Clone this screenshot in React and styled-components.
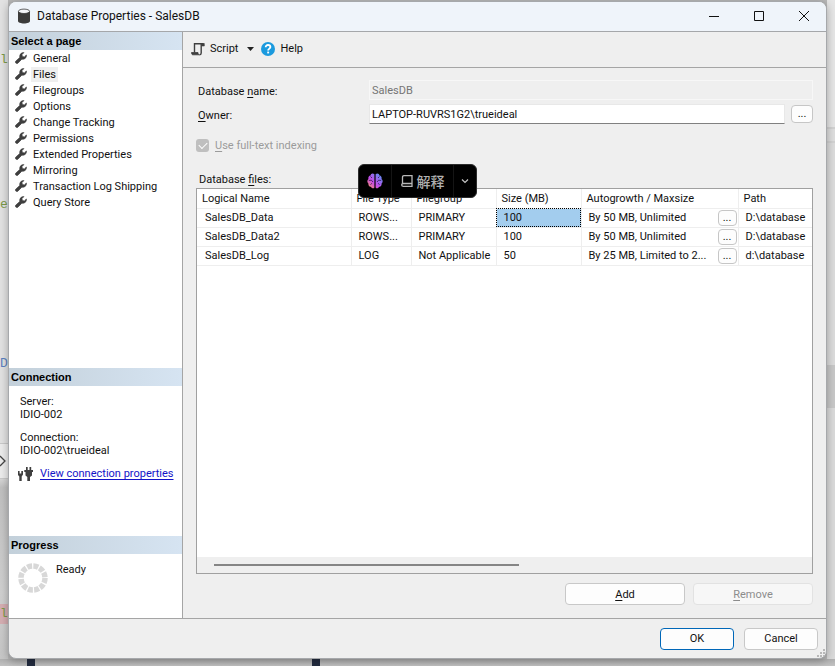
import React, { useState } from 'react';
import styled, { createGlobalStyle, css } from 'styled-components';

const pages = [
  'General',
  'Files',
  'Filegroups',
  'Options',
  'Change Tracking',
  'Permissions',
  'Extended Properties',
  'Mirroring',
  'Transaction Log Shipping',
  'Query Store',
];

const files = [
  { name: 'SalesDB_Data', type: 'ROWS...', group: 'PRIMARY', size: '100', growth: 'By 50 MB, Unlimited', path: 'D:\\database' },
  { name: 'SalesDB_Data2', type: 'ROWS...', group: 'PRIMARY', size: '100', growth: 'By 50 MB, Unlimited', path: 'D:\\database' },
  { name: 'SalesDB_Log', type: 'LOG', group: 'Not Applicable', size: '50', growth: 'By 25 MB, Limited to 2...', path: 'd:\\database' },
];

const DatabaseIcon = () => (
  <svg width="14" height="16" viewBox="0 0 14 16">
    <path d="M1 3.500v9.500c0 1.500 2.700 2.500 6 2.500s6-1 6-2.500V3.500z" fill="#3b3b3b" />
    <ellipse cx="7" cy="3.300" rx="5.600" ry="2.200" fill="#f4f6fa" stroke="#3b3b3b" strokeWidth=".8" />
  </svg>
);

const WrenchIcon = () => (
  <svg width="12" height="12" viewBox="0 0 12 12" fill="#3f3f3f" stroke="#3f3f3f" strokeWidth=".7" strokeLinejoin="round">
    <path d="M.7 9.200 4.800 5.500C4.300 2.700 6 .5 8.900.6L7 2.500l.3 2.100 2.100.3 2-1.900c.3 2.700-1.700 4.700-4.600 4.200L2.900 11.200C1.400 12.200-.3 10.600.7 9.200z" />
  </svg>
);

const ScriptIcon = () => (
  <svg width="14" height="14" viewBox="0 0 14 14" fill="none" stroke="#3f3f3f">
    <path d="M3.500 10.500V1.700h9M10.200 2v9c0 1.200-.4 1.700-1.500 1.700" strokeWidth="1.400" />
    <path d="M10.500 4V1.500h2.800V4z" fill="#3f3f3f" strokeWidth=".6" />
    <path d="M.5 10.500h6.500c0 1.200.4 2.300 1.500 2.300H2C1 12.800.5 12 .5 10.500z" fill="#3f3f3f" strokeWidth=".8" />
  </svg>
);

const HelpIcon = () => (
  <svg width="14" height="14" viewBox="0 0 14 14">
    <circle cx="7" cy="7" r="7" fill="#1b9ade" />
    <path d="M4.700 5.300C4.700 3.700 5.600 3 7 3s2.400.8 2.400 2.100C9.400 6.700 7.100 6.600 7.100 8.600" fill="none" stroke="#fff" strokeWidth="1.800" />
    <rect x="6.200" y="9.600" width="1.900" height="1.800" fill="#fff" />
  </svg>
);

const PlugIcon = () => (
  <svg width="15" height="14" viewBox="0 0 15 14" fill="#3f3f3f">
    <path d="M0 4h1.600v2.600h1.700V4h1.700v3.500L3.700 9.500V14H1.300V9.500L0 8z" />
    <path d="M8 0h1.700v3h1.800V0h1.700v3H15v2h-1v3.500l-2 1.500v4H9.300v-4l-1.800-1.500V5H6.300V3H8z" />
  </svg>
);

const BrainIcon = () => (
  <svg width="16" height="16" viewBox="0 0 16 16">
    <defs>
      <linearGradient id="brain" x1="0" y1="1" x2="1" y2="0">
        <stop offset="0" stopColor="#ff9a5a" />
        <stop offset=".4" stopColor="#c64be8" />
        <stop offset="1" stopColor="#4b9af5" />
      </linearGradient>
    </defs>
    <path d="M7.400 1.300C5.600-.2 3.700 1 3.500 2.600 1.600 3 1 4.700 1.500 6 0 7.200-.1 9.300 1.400 10.500c-.2 2 1 3.200 2.600 3.300.8 1.800 2.600 2 3.400.7zM8.600 1.300c1.800-1.500 3.700-.3 3.900 1.300 1.900.4 2.500 2.100 2 3.400 1.500 1.200 1.600 3.300.1 4.500.2 2-1 3.200-2.600 3.300-.8 1.800-2.600 2-3.400.7z" fill="url(#brain)" />
    <path d="M3.500 3.500 5 5M1.800 7.500l2.500-.3L6 9M3.500 11.800l1.300-1.600M12.500 3.500 11 5M14.200 7.500l-2.500-.3L10 9M12.500 11.800l-1.300-1.600" fill="none" stroke="#241038" strokeWidth=".7" />
  </svg>
);

const BookIcon = () => (
  <svg width="12" height="12" viewBox="0 0 12 12" fill="none" stroke="#b8b8b8" strokeWidth="1.300">
    <path d="M11 8.500V.7H3C1.700.7 1.500 1.300 1.500 2.500v6M11 8.500H2.500C1.400 8.500.7 9 .7 10s.7 1.300 1.800 1.300H11z" />
  </svg>
);

const ChevronIcon = () => (
  <svg width="8" height="6" viewBox="0 0 8 6" fill="none" stroke="#c4c4c4" strokeWidth="1.200">
    <path d="m1 1.500 3 3 3-3" />
  </svg>
);

const CaptionIcon = ({ shape }) => (
  <svg width="12" height="12" viewBox="0 0 12 12" fill="none" stroke="#111">
    <path d={shape} />
  </svg>
);

const App = () => {
  const [page, setPage] = useState('Files');

  return (
    <>
      <GlobalStyle />
      <Desktop>
        <EditorEdge aria-hidden="true">
          <Gap $h={50} />
          <Code>l</Code>
          <Gap $h={125} />
          <Code>e</Code>
          <Gap $h={139} />
          <Code $color="#5c80c0">D</Code>
          <Gap $h={69} />
          <Arrow>
            <svg width="8" height="12" viewBox="0 0 8 12" fill="none" stroke="#444" strokeWidth="1.300"><path d="m0 1 5 5-5 5" /></svg>
          </Arrow>
          <Gap $h={125} />
          <Code $marked>l</Code>
        </EditorEdge>
        <Dialog>
          <TitleBar>
            <DatabaseIcon />
            <h1>Database Properties - SalesDB</h1>
            <CaptionButton aria-label="Minimize"><CaptionIcon shape="M1 6.500h10" /></CaptionButton>
            <CaptionButton aria-label="Maximize"><CaptionIcon shape="M1.500 1.500h9v9h-9z" /></CaptionButton>
            <CaptionButton aria-label="Close"><CaptionIcon shape="m1 1 10 10M11 1 1 11" /></CaptionButton>
          </TitleBar>
          <Body>
            <Sidebar>
              <SideTitle>Select a page</SideTitle>
              <PageList>
                {pages.map((item) => (
                  <li key={item}>
                    <PageButton $active={item === page} onClick={() => setPage(item)}>
                      <WrenchIcon />
                      <span>{item}</span>
                    </PageButton>
                  </li>
                ))}
              </PageList>
              <SideTitle>Connection</SideTitle>
              <Connection>
                <dl>
                  <dt>Server:</dt>
                  <dd>IDIO-002</dd>
                  <dt>Connection:</dt>
                  <dd>IDIO-002\trueideal</dd>
                </dl>
                <ConnectionLink>
                  <PlugIcon />
                  <a href="#connection">View connection properties</a>
                </ConnectionLink>
              </Connection>
              <SideTitle>Progress</SideTitle>
              <Progress>
                <svg width="30" height="30" viewBox="0 0 30 30" fill="none">
                  <circle cx="15" cy="15" r="12" stroke="#d8d8d8" strokeWidth="5.500" strokeDasharray="5 1.283" />
                </svg>
                <span>Ready</span>
              </Progress>
            </Sidebar>
            <Main>
              <Toolbar>
                <ToolButton>
                  <ScriptIcon />
                  Script
                  <Caret width="7" height="4" viewBox="0 0 7 4"><path d="M0 0h7L3.500 4z" fill="#222" /></Caret>
                </ToolButton>
                <ToolButton>
                  <HelpIcon />
                  Help
                </ToolButton>
              </Toolbar>
              <Content>
                <Field>
                  <label htmlFor="dbname">Database <u>n</u>ame:</label>
                  <TextInput id="dbname" defaultValue="SalesDB" disabled />
                </Field>
                <Field>
                  <label htmlFor="owner"><u>O</u>wner:</label>
                  <TextInput id="owner" defaultValue="LAPTOP-RUVRS1G2\trueideal" />
                  <BrowseButton aria-label="Browse owner">...</BrowseButton>
                </Field>
                <CheckLabel>
                  <input type="checkbox" defaultChecked disabled />
                  <span><u>U</u>se full-text indexing</span>
                </CheckLabel>
                <FilesHead>
                  <span id="files-label">Database <u>f</u>iles:</span>
                  <Popup>
                    <PopupButton $w={32} aria-label="Assistant"><BrainIcon /></PopupButton>
                    <PopupButton $w={62}><BookIcon />解释</PopupButton>
                    <PopupButton $w={23} aria-label="More"><ChevronIcon /></PopupButton>
                  </Popup>
                </FilesHead>
                <GridBox>
                  <FileTable aria-labelledby="files-label">
                    <colgroup>
                      <col width="154" />
                      <col width="60" />
                      <col width="85" />
                      <col width="85" />
                      <col width="157" />
                      <col />
                    </colgroup>
                    <thead>
                      <tr>
                        <th>Logical Name</th>
                        <th>File Type</th>
                        <th>Filegroup</th>
                        <th>Size (MB)</th>
                        <th>Autogrowth / Maxsize</th>
                        <th>Path</th>
                      </tr>
                    </thead>
                    <tbody>
                      {files.map((file, i) => (
                        <tr key={file.name}>
                          <td>{file.name}</td>
                          <td>{file.type}</td>
                          <td>{file.group}</td>
                          <SizeCell $selected={i === 0}>{file.size}</SizeCell>
                          <td>
                            <Growth>
                              {file.growth}
                              <CellButton aria-label={`Edit growth of ${file.name}`}>...</CellButton>
                            </Growth>
                          </td>
                          <td>{file.path}</td>
                        </tr>
                      ))}
                    </tbody>
                  </FileTable>
                  <ScrollTrack><ScrollThumb /></ScrollTrack>
                </GridBox>
                <Actions>
                  <Button $w={120}><u>A</u>dd</Button>
                  <Button $w={120} disabled><u>R</u>emove</Button>
                </Actions>
              </Content>
            </Main>
          </Body>
          <Footer>
            <Button $w={74} $primary>OK</Button>
            <Button $w={74}>Cancel</Button>
            <Grip width="9" height="9" viewBox="0 0 9 9" fill="#b8b8b8">
              <path d="M6 0h2v2H6zM3 3h2v2H3zM6 3h2v2H6zM0 6h2v2H0zM3 6h2v2H3zM6 6h2v2H6z" />
            </Grip>
          </Footer>
        </Dialog>
        <RightEdge />
        <BottomEdge>
          <DarkBar />
          <DarkBar />
        </BottomEdge>
      </Desktop>
    </>
  );
};

const GlobalStyle = createGlobalStyle`
* {
  box-sizing: border-box;
}
body {
  margin: 0;
  font: 11px/13px Roboto, "Liberation Sans", sans-serif;
  color: #111;
}
button, input {
  font: inherit;
  color: inherit;
}
h1, h2, ul, dl, dd {
  margin: 0;
  padding: 0;
}
u {
  text-underline-offset: 2px;
}
`;

const Desktop = styled.div`
  display: grid;
  grid-template-columns: 8px 1fr 8px;
  grid-template-rows: 1fr 7px;
  min-height: 100vh;
  background: #b9b9b9;
  overflow: hidden;
`;

const EditorEdge = styled.div`
  display: flex;
  flex-direction: column;
  background: linear-gradient(#e2e2e2 0 72%, #c0c0c0 74%, #d0d0d0 90%, #c6c6c6);
`;

const Gap = styled.div`
  height: ${({ $h }) => $h}px;
`;

const Code = styled.span`
  height: 20px;
  font: 13px/20px "Liberation Mono", monospace;
  color: ${({ $color }) => $color || '#7c9a48'};
  background: ${({ $marked }) => ($marked ? '#d5aeb2' : 'none')};
`;

const Arrow = styled.div`
  display: flex;
  align-items: center;
  height: 36px;
  background: #ececec;
  border-top: 1px solid #c9c9c9;
  border-bottom: 1px solid #c9c9c9;
`;

const RightEdge = styled.div`
  background: linear-gradient(#e6e6e6 0 127px, #d2d2d2 127px 129px, #dedede 129px 141px, #d2d2d2 141px 143px, #dcdcdc 143px 365px, #c8c8c8 365px 408px, #dadada 408px);
`;

const BottomEdge = styled.div`
  display: flex;
  gap: 277px;
  grid-column: 1 / -1;
  padding-left: 27px;
  background: linear-gradient(#b0b0b0, #c2c2c2);
`;

const DarkBar = styled.div`
  width: 8px;
  background: #232c40;
`;

const Dialog = styled.main`
  display: flex;
  flex-direction: column;
  position: relative;
  z-index: 1;
  margin-top: 1px;
  background: #efefef;
  border: 1px solid #a6a8ab;
  border-radius: 8px;
  box-shadow: 0 2px 8px rgba(0, 0, 0, .3);
  overflow: hidden;
`;

const TitleBar = styled.header`
  display: flex;
  align-items: center;
  height: 30px;
  padding: 0 0 2px 8px;
  background: #eff4fa;
  border-bottom: 1px solid #a5a7aa;
  h1 {
    flex: 1;
    padding-left: 6px;
    font: 12px/16px Roboto, "Open Sans", sans-serif;
  }
`;

const CaptionButton = styled.button`
  display: flex;
  align-items: center;
  justify-content: center;
  width: 45px;
  height: 28px;
  padding: 0;
  background: none;
  border: none;
`;

const Body = styled.div`
  display: flex;
  flex: 1;
`;

const Sidebar = styled.aside`
  display: flex;
  flex-direction: column;
  width: 174px;
  background: #fff;
  border-right: 1px solid #a5a5a5;
`;

const SideTitle = styled.h2`
  height: 18px;
  padding-left: 2px;
  font: bold 11px/18px "Liberation Sans", Arial, sans-serif;
  color: #000;
  background: linear-gradient(90deg, #c3d0da, #d6e4f2);
`;

const PageList = styled.ul`
  flex: 1;
  list-style: none;
`;

const PageButton = styled.button`
  display: flex;
  align-items: center;
  gap: 4px;
  width: 100%;
  height: 16px;
  padding: 0 6px;
  background: none;
  border: none;
  span {
    padding: 0 2px;
    line-height: 15px;
    background: ${({ $active }) => ($active ? '#efefef' : 'none')};
  }
`;

const Connection = styled.div`
  height: 150px;
  padding: 9px 11px;
  dd {
    margin-bottom: 10px;
  }
`;

const ConnectionLink = styled.div`
  display: flex;
  gap: 7px;
  margin-left: -2px;
  white-space: nowrap;
  svg {
    flex-shrink: 0;
  }
  a {
    color: #1414c8;
    text-underline-offset: 2px;
  }
`;

const Progress = styled.div`
  display: flex;
  gap: 8px;
  height: 64px;
  padding: 9px;
`;

const Main = styled.section`
  display: flex;
  flex: 1;
  flex-direction: column;
  min-width: 0;
`;

const Toolbar = styled.div`
  display: flex;
  gap: 7px;
  height: 36px;
  padding: 0 0 2px 8px;
  border-bottom: 1px solid #a5a5a5;
`;

const ToolButton = styled.button`
  display: flex;
  align-items: center;
  gap: 5px;
  padding: 0;
  background: none;
  border: none;
`;

const Caret = styled.svg`
  margin-left: 4px;
`;

const Content = styled.div`
  display: flex;
  flex: 1;
  flex-direction: column;
  padding: 10px 13px 13px;
`;

const Field = styled.div`
  display: flex;
  align-items: center;
  height: 24px;
  label {
    width: 173px;
    padding: 2px 0 0 2px;
  }
`;

const TextInput = styled.input`
  flex: 1;
  height: 20px;
  padding: 0 2px;
  background: #fff;
  border: 1px solid #e8e8e8;
  border-bottom-color: #808080;
  outline: none;
  &:disabled {
    color: #757575;
    background: #efefef;
    border-color: #f7f7f7;
  }
`;

const BrowseButton = styled.button`
  width: 22px;
  height: 18px;
  margin-left: 6px;
  padding: 0;
  line-height: 16px;
  background: #fdfdfd;
  border: 1px solid #c6c6c6;
  border-radius: 4px;
`;

const CheckLabel = styled.label`
  display: flex;
  align-items: center;
  gap: 6px;
  height: 38px;
  color: #9b9b9b;
  input {
    appearance: none;
    width: 13px;
    height: 13px;
    margin: 0;
    background: #bfbfbf;
    border-radius: 3px;
    &::before {
      content: "";
      display: block;
      width: 7px;
      height: 4px;
      margin: 3px;
      border: solid #fff;
      border-width: 0 0 1px 1px;
      transform: rotate(-45deg);
    }
  }
`;

const FilesHead = styled.div`
  display: flex;
  align-items: center;
  position: relative;
  height: 24px;
  padding: 6px 0 0 3px;
`;

// floats over the header row of the grid
const Popup = styled.div`
  display: flex;
  position: absolute;
  z-index: 2;
  top: 0;
  left: 162px;
  height: 34px;
  background: #000;
  border: 1px solid #2c2c2c;
  border-radius: 6px;
`;

const PopupButton = styled.button`
  display: flex;
  align-items: center;
  justify-content: center;
  gap: 4px;
  width: ${({ $w }) => $w}px;
  padding: 0;
  font: 500 14px/20px "Noto Sans CJK SC", sans-serif;
  color: #b0b0b0;
  background: none;
  border: none;
  & + & {
    border-left: 1px solid #151515;
  }
`;

const GridBox = styled.div`
  display: flex;
  flex: 1;
  flex-direction: column;
  justify-content: space-between;
  background: #fff;
  border: 1px solid #a0a0a0;
`;

const FileTable = styled.table`
  width: 100%;
  table-layout: fixed;
  border-collapse: collapse;
  th, td {
    height: 19px;
    padding: 0 0 0 7px;
    font-weight: normal;
    text-align: left;
    white-space: nowrap;
    border-right: 1px solid #eee;
    border-bottom: 1px solid #eee;
  }
  th {
    padding-left: 5px;
  }
  td:first-child {
    padding-left: 8px;
  }
  th:last-child, td:last-child {
    border-right: none;
  }
`;

const SizeCell = styled.td`
  ${({ $selected }) => $selected && css`
    background: #a3cdee;
    outline: 1px dotted #000;
    outline-offset: -1px;
  `}
`;

const Growth = styled.div`
  display: flex;
  align-items: center;
  justify-content: space-between;
  padding-right: 1px;
`;

const CellButton = styled(BrowseButton)`
  width: 19px;
  height: 16px;
  line-height: 14px;
`;

const ScrollTrack = styled.div`
  height: 16px;
  padding: 7px 12px 7px 17px;
  background: #efefef;
`;

const ScrollThumb = styled.div`
  width: 52%;
  height: 2px;
  background: #858585;
`;

const Actions = styled.div`
  display: flex;
  justify-content: flex-end;
  gap: 8px;
  padding-top: 9px;
`;

const Button = styled.button`
  width: ${({ $w }) => $w}px;
  height: 22px;
  padding: 0;
  background: #fdfdfd;
  border: 1px solid ${({ $primary }) => ($primary ? '#0067b8' : '#c8c8c8')};
  border-radius: 4px;
  &:disabled {
    color: #8c8c8c;
    background: #f7f7f7;
    border-color: #e2e2e2;
  }
`;

const Footer = styled.footer`
  display: flex;
  align-items: center;
  justify-content: flex-end;
  gap: 10px;
  position: relative;
  height: 40px;
  padding-right: 8px;
  border-top: 1px solid #a5a5a5;
`;

const Grip = styled.svg`
  position: absolute;
  right: 0;
  bottom: 0;
`;

export default App;
